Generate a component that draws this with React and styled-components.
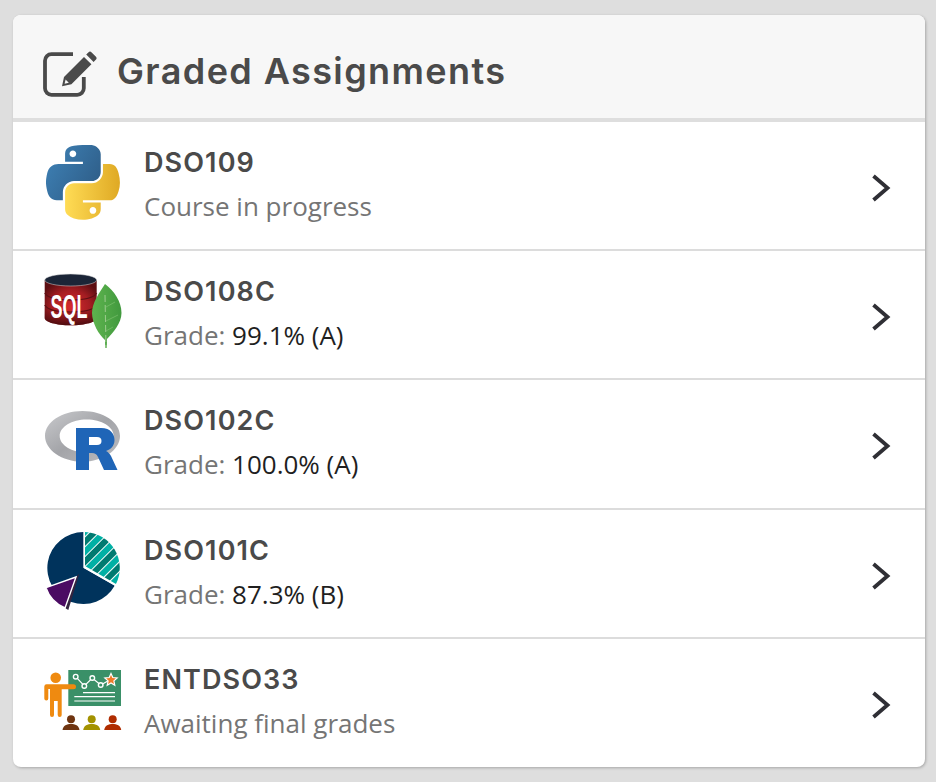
import styled, { createGlobalStyle } from "styled-components";

const GlobalStyle = createGlobalStyle`
  html, body {
    margin: 0;
    padding: 0;
    background: #dedede;
  }
`;

function EditIcon() {
  return (
    <HeaderIcon viewBox="0 0 56 46" aria-hidden="true">
      <path
        d="M30 3.200H8.500a6.500 6.500 0 0 0-6.500 6.500v27.600a6.500 6.500 0 0 0 6.500 6.500h25.800a6.500 6.500 0 0 0 6.500-6.500V26"
        fill="none"
        stroke="#4a4a4a"
        strokeWidth="3.800"
      />
      <path
        d="M45.600 1.200c.8-.8 2-.8 2.800 0l4.600 4.600c.8.8.8 2 0 2.800l-2.400 2.400-7.400-7.400zM41 5.900l7.400 7.400-20 20-9.400 2 2-9.400z"
        fill="#4a4a4a"
      />
      <path d="M22.600 28.600l3.200 3.200-4.200.9z" fill="#f7f7f7" />
    </HeaderIcon>
  );
}

function PythonLogo() {
  return (
    <LogoSvg viewBox="0 0 80 80" aria-hidden="true">
      <defs>
        <linearGradient id="pyBlue" x1="0" y1="0" x2="1" y2="0.6">
          <stop offset="0" stopColor="#3f83b8" />
          <stop offset="1" stopColor="#2f5f8a" />
        </linearGradient>
        <linearGradient id="pyYellow" x1="0" y1="0" x2="1" y2="0">
          <stop offset="0" stopColor="#ffdc55" />
          <stop offset="1" stopColor="#dfa924" />
        </linearGradient>
      </defs>
      <g transform="translate(3 3) scale(0.665)">
        <path
          fill="url(#pyBlue)"
          d="M54.92 0C50.34.02 45.96.41 42.11 1.09 30.76 3.1 28.7 7.29 28.7 15.03v10.22h26.81v3.41H18.64c-7.79 0-14.62 4.68-16.75 13.59-2.46 10.21-2.57 16.59 0 27.25 1.9 7.94 6.46 13.59 14.25 13.59h9.22v-12.25c0-8.85 7.66-16.65 16.75-16.65h26.78c7.45 0 13.41-6.14 13.41-13.63V14.03c0-7.27-6.13-12.72-13.41-13.94C64.28.33 59.5-.02 54.92 0zm-14.5 8.22c2.77 0 5.03 2.3 5.03 5.12 0 2.82-2.26 5.1-5.03 5.1-2.78 0-5.03-2.28-5.03-5.1 0-2.82 2.25-5.12 5.03-5.12z"
        />
        <path
          fill="url(#pyYellow)"
          d="M85.64 28.66v11.9c0 9.23-7.83 17-16.75 17H42.11c-7.34 0-13.41 6.28-13.41 13.63v25.53c0 7.27 6.32 11.54 13.41 13.63 8.49 2.49 16.63 2.94 26.78 0 6.75-1.96 13.41-5.89 13.41-13.63V86.5H55.52v-3.4h40.19c7.79 0 10.69-5.43 13.4-13.6 2.8-8.41 2.74-16.5 0-27.25-1.93-7.74-5.6-13.59-13.4-13.59zm-15.06 64.65c2.78 0 5.03 2.28 5.03 5.1 0 2.82-2.25 5.12-5.03 5.12-2.77 0-5.03-2.3-5.03-5.12 0-2.82 2.26-5.1 5.03-5.1z"
        />
      </g>
    </LogoSvg>
  );
}

function SqlLogo() {
  return (
    <LogoSvg viewBox="0 0 80 80" aria-hidden="true">
      <defs>
        <radialGradient id="sqlRed" cx="0.5" cy="0.6" r="0.62">
          <stop offset="0" stopColor="#d62a2e" />
          <stop offset="0.6" stopColor="#a51d22" />
          <stop offset="1" stopColor="#5c0e12" />
        </radialGradient>
        <linearGradient id="sqlBottom" x1="0" y1="0" x2="0" y2="1">
          <stop offset="0" stopColor="#7a1418" stopOpacity="0" />
          <stop offset="1" stopColor="#3f090c" stopOpacity="0.85" />
        </linearGradient>
        <linearGradient id="leafGreen" x1="0" y1="0" x2="1" y2="0">
          <stop offset="0" stopColor="#5eb44e" />
          <stop offset="1" stopColor="#41993e" />
        </linearGradient>
      </defs>
      <path d="M1.700 9v38c0 4 11.600 7.300 26 7.300s26-3.300 26-7.300V9z" fill="url(#sqlRed)" />
      <path d="M1.700 34v13c0 4 11.600 7.300 26 7.300s26-3.300 26-7.300V34c-3 5-14 7-26 7s-23-2-26-7z" fill="url(#sqlBottom)" />
      <path d="M1.700 22c3 5 14 7 26 7s23-2 26-7" fill="none" stroke="#5e1014" strokeWidth="1.200" />
      <path d="M1.700 34c3 5 14 7 26 7s23-2 26-7" fill="none" stroke="#5e1014" strokeWidth="1.200" />
      <ellipse cx="27.700" cy="9" rx="26" ry="6" fill="#1b2537" stroke="#ddd" strokeWidth="0.500" />
      <LogoText x="7.600" y="47" fontSize="33" textLength="37" lengthAdjust="spacingAndGlyphs">
        SQL
      </LogoText>
      <path
        d="M62 13C71 20 78.500 30 78.500 42 78.500 52 70 62 64 68L63.800 77H62.200L62 69C56 64 49 52 49 42 49 32 56 22 62 13Z"
        fill="url(#leafGreen)"
      />
      <path d="M62 24 63 77" stroke="#d9e6c8" strokeWidth="0.700" strokeDasharray="7 3" strokeOpacity="0.8" />
      <path d="M63 36 72 31M63 50 75 44M63 60 70 56" stroke="#8fcb7e" strokeWidth="0.500" />
    </LogoSvg>
  );
}

function RLogo() {
  return (
    <LogoSvg viewBox="0 0 80 80" aria-hidden="true">
      <defs>
        <linearGradient id="rGray" x1="0" y1="0" x2="1" y2="1">
          <stop offset="0" stopColor="#c9cacd" />
          <stop offset="0.5" stopColor="#a3a4a8" />
          <stop offset="1" stopColor="#bcbdc1" />
        </linearGradient>
      </defs>
      <path
        fillRule="evenodd"
        fill="url(#rGray)"
        d="M39.500 11C60.200 11 77 22.200 77 36S60.200 61.700 39.500 61.700 2 49.800 2 36 18.800 11 39.500 11ZM43.700 19.500C28.800 19.500 16.700 26.900 16.700 36S28.800 52.500 43.700 52.500 70.700 45.100 70.700 36 58.600 19.500 43.700 19.500Z"
      />
      <path
        fillRule="evenodd"
        fill="#1f65b7"
        d="M33 28H58C68 28 71.500 34.500 71.500 40 71.500 46 67.500 49.500 63 51 65 52 66.500 53.500 68 56L74.500 70H61L55 57C53.500 54 52 53 49 53H46V70H33ZM46 37V45H54C57 45 58.500 43.500 58.500 41 58.500 38.500 57 37 54 37Z"
      />
    </LogoSvg>
  );
}

function PieLogo() {
  return (
    <LogoSvg viewBox="0 0 80 80" aria-hidden="true">
      <defs>
        <pattern
          id="pieStripes"
          width="14"
          height="14"
          patternUnits="userSpaceOnUse"
          patternTransform="rotate(-45)"
        >
          <rect width="14" height="14" fill="#fff" />
          <rect width="14" height="6" fill="#00b0a4" />
          <rect y="7" width="14" height="6" fill="#007a70" />
        </pattern>
      </defs>
      <path d="M40.500 37.700V2A36 36 0 1 0 71.800 55.500Z" fill="#00335c" />
      <path d="M42 36V2A36 36 0 0 1 73 54Z" fill="url(#pieStripes)" />
      <path d="M41.300 2V37.700L72.500 55.500" fill="none" stroke="#fff" strokeWidth="1.300" />
      <path d="M36.300 43.700 25.300 80 22 78 33 47Z" fill="#33243f" />
      <path d="M33 47 3 57.700C6 67 13 74 22 78Z" fill="#4b0b63" stroke="#fff" strokeWidth="1.400" />
    </LogoSvg>
  );
}

function ClassroomLogo() {
  const audience = [
    { x: 28, color: "#6f3410" },
    { x: 48.7, color: "#a39200" },
    { x: 69.7, color: "#b02c00" },
  ];
  return (
    <LogoSvg viewBox="0 0 80 80" aria-hidden="true">
      <rect x="25.300" y="11" width="52.700" height="36" fill="#3a9068" />
      <polyline
        points="32.700,17.700 41.300,27 49.300,19 57.700,26 68,20.300"
        fill="none"
        stroke="#fff"
        strokeWidth="1.200"
      />
      <g fill="#3a9068" stroke="#fff" strokeWidth="1.400">
        <circle cx="32.700" cy="17.700" r="2.300" />
        <circle cx="41.300" cy="27" r="2.300" />
        <circle cx="49.300" cy="19" r="2.300" />
        <circle cx="57.700" cy="26" r="2.300" />
      </g>
      <path
        d="M68 14.500 69.800 18.500 74.200 19 70.900 21.900 71.800 26.200 68 24 64.200 26.200 65.100 21.900 61.800 19 66.200 18.500Z"
        fill="#ee7b2a"
        stroke="#fff"
        strokeWidth="1.200"
      />
      <path d="M40 33.700H72M31.300 37.700H72M31.300 42H72" stroke="#fff" strokeWidth="1.200" />
      <circle cx="12.700" cy="18.700" r="5.300" fill="#ef8a10" />
      <path
        d="M3.500 25.300H30.500A2.500 2.500 0 0 1 30.500 30.300H18.700V56A2 2 0 0 1 14.700 56V42H11V56A2 2 0 0 1 7 56V30H5.300V39.500A2 2 0 0 1 1.300 39.500V27.500A2.300 2.300 0 0 1 3.500 25.300Z"
        fill="#ef8a10"
      />
      {audience.map((p) => (
        <g key={p.x} fill={p.color}>
          <circle cx={p.x} cy="60.300" r="4" />
          <path d={`M${p.x - 8.500} 71C${p.x - 8} 66.500 ${p.x - 4} 65 ${p.x} 65S${p.x + 8} 66.500 ${p.x + 8.500} 71Z`} />
        </g>
      ))}
    </LogoSvg>
  );
}

const assignments = [
  { code: "DSO109", Logo: PythonLogo, note: "Course in progress" },
  { code: "DSO108C", Logo: SqlLogo, note: "Grade: ", grade: "99.1% (A)" },
  { code: "DSO102C", Logo: RLogo, note: "Grade: ", grade: "100.0% (A)" },
  { code: "DSO101C", Logo: PieLogo, note: "Grade: ", grade: "87.3% (B)" },
  { code: "ENTDSO33", Logo: ClassroomLogo, note: "Awaiting final grades" },
];

export default function App() {
  return (
    <>
      <GlobalStyle />
      <Page>
        <Card>
          <Header>
            <EditIcon />
            <Title>Graded Assignments</Title>
          </Header>
          {assignments.map(({ code, Logo, note, grade }) => (
            <Row key={code}>
              <Logo />
              <RowText>
                <Code>{code}</Code>
                <Note>
                  {note}
                  {grade && <Grade>{grade}</Grade>}
                </Note>
              </RowText>
              <Chevron viewBox="0 0 20 28" aria-hidden="true">
                <path d="M2.500 2 16.500 14 2.500 26" fill="none" stroke="#2f2f35" strokeWidth="3.800" />
              </Chevron>
            </Row>
          ))}
        </Card>
      </Page>
    </>
  );
}

const Page = styled.div`
  width: 936px;
  height: 782px;
  box-sizing: border-box;
  padding: 15px 11px 15px 13px;
  overflow: hidden;
`;

const Card = styled.div`
  height: 752px;
  background: #fff;
  border-radius: 8px;
  overflow: hidden;
  box-shadow: 1px 1px 3px rgba(0, 0, 0, 0.25);
`;

const Header = styled.div`
  height: 107px;
  box-sizing: border-box;
  display: flex;
  align-items: center;
  gap: 18px;
  padding: 14px 0 0 30px;
  background: #f7f7f7;
  border-bottom: 4px solid #dedede;
`;

const HeaderIcon = styled.svg`
  width: 56px;
  height: 46px;
  flex: none;
`;

const Title = styled.h2`
  margin: 0 0 6px;
  font-family: Inter, "Liberation Sans", sans-serif;
  font-size: 36px;
  font-weight: 600;
  letter-spacing: 1.4px;
  color: #4a4a4a;
`;

const Row = styled.div`
  height: 129.2px;
  box-sizing: border-box;
  display: flex;
  align-items: flex-start;
  gap: 21px;
  padding: 20px 34px 0 30px;
  border-bottom: 2px solid #dcdcdc;

  &:last-child {
    border-bottom: none;
  }
`;

const LogoSvg = styled.svg`
  width: 80px;
  height: 80px;
  flex: none;
`;

const RowText = styled.div`
  flex: 1;
  display: flex;
  flex-direction: column;
  gap: 10px;
  padding-top: 5px;
`;

const Code = styled.div`
  font-family: Inter, "Liberation Sans", sans-serif;
  font-size: 27px;
  line-height: 32px;
  font-weight: 600;
  letter-spacing: 1.1px;
  color: #4a4a4a;
`;

const Note = styled.div`
  font-family: "Open Sans", "Liberation Sans", sans-serif;
  font-size: 26px;
  line-height: 34px;
  color: #757575;
`;

const Grade = styled.span`
  font-weight: 500;
  color: #1f1f1f;
`;

const LogoText = styled.text`
  font-family: "Liberation Sans", sans-serif;
  font-weight: 700;
  fill: #fff;
`;

const Chevron = styled.svg`
  width: 20px;
  height: 28px;
  flex: none;
  margin-top: 32px;
`;
